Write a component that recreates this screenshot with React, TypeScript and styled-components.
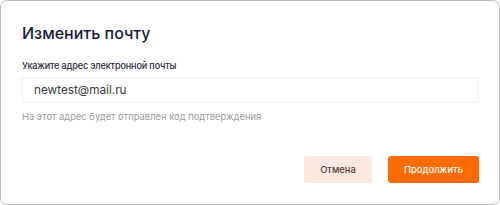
import styled, { createGlobalStyle } from 'styled-components'

const GlobalStyle = createGlobalStyle`
  html, body {
    margin: 0;
    padding: 0;
    background: #ffffff;
  }
  * {
    box-sizing: border-box;
  }
`

const Card = styled.div`
  width: 500px;
  height: 205px;
  border: 1px solid #bdbdbd;
  border-radius: 7px;
  background: #ffffff;
  padding: 21px 21px 21px 21px;
  display: flex;
  flex-direction: column;
  font-family: Inter, 'Noto Sans', sans-serif;
`

const Title = styled.h1`
  margin: 0;
  font-size: 16px;
  line-height: 22px;
  font-weight: 500;
  color: #1a1b3a;
`

const Field = styled.div`
  display: flex;
  flex-direction: column;
  margin-top: 16px;
`

const Label = styled.label`
  font-size: 9.2px;
  line-height: 12px;
  letter-spacing: -0.2px;
  font-weight: 500;
  color: #2b2b3a;
  margin-bottom: 5px;
`

const Input = styled.input`
  width: 457px;
  height: 26px;
  border: 1px solid #f1f1f1;
  border-radius: 2px;
  padding: 0 11px;
  font-family: Inter, 'Noto Sans', sans-serif;
  font-size: 11.75px;
  color: #3a3a3a;
  outline: none;
  background: #ffffff;
`

const Hint = styled.div`
  margin-top: 8px;
  font-size: 9.4px;
  line-height: 12px;
  color: #9b9b9b;
`

const Actions = styled.div`
  margin-top: auto;
  margin-right: -1px;
  display: flex;
  justify-content: flex-end;
  gap: 16px;
`

const Button = styled.button<{ $primary?: boolean }>`
  height: 27px;
  padding: 0;
  border: none;
  border-radius: 3px;
  font-family: Inter, 'Noto Sans', sans-serif;
  font-size: 9.4px;
  font-weight: 500;
  cursor: pointer;
  background: ${(p) => (p.$primary ? '#ff6b00' : '#fbe8de')};
  color: ${(p) => (p.$primary ? '#ffffff' : '#5b3b33')};
  width: ${(p) => (p.$primary ? '91px' : '68px')};
`

export default function App() {
  return (
    <>
      <GlobalStyle />
      <Card>
        <Title>Изменить почту</Title>
        <Field>
          <Label>Укажите адрес электронной почты</Label>
          <Input defaultValue="newtest@mail.ru" />
        </Field>
        <Hint>На этот адрес будет отправлен код подтверждения</Hint>
        <Actions>
          <Button>Отмена</Button>
          <Button $primary>Продолжить</Button>
        </Actions>
      </Card>
    </>
  )
}
